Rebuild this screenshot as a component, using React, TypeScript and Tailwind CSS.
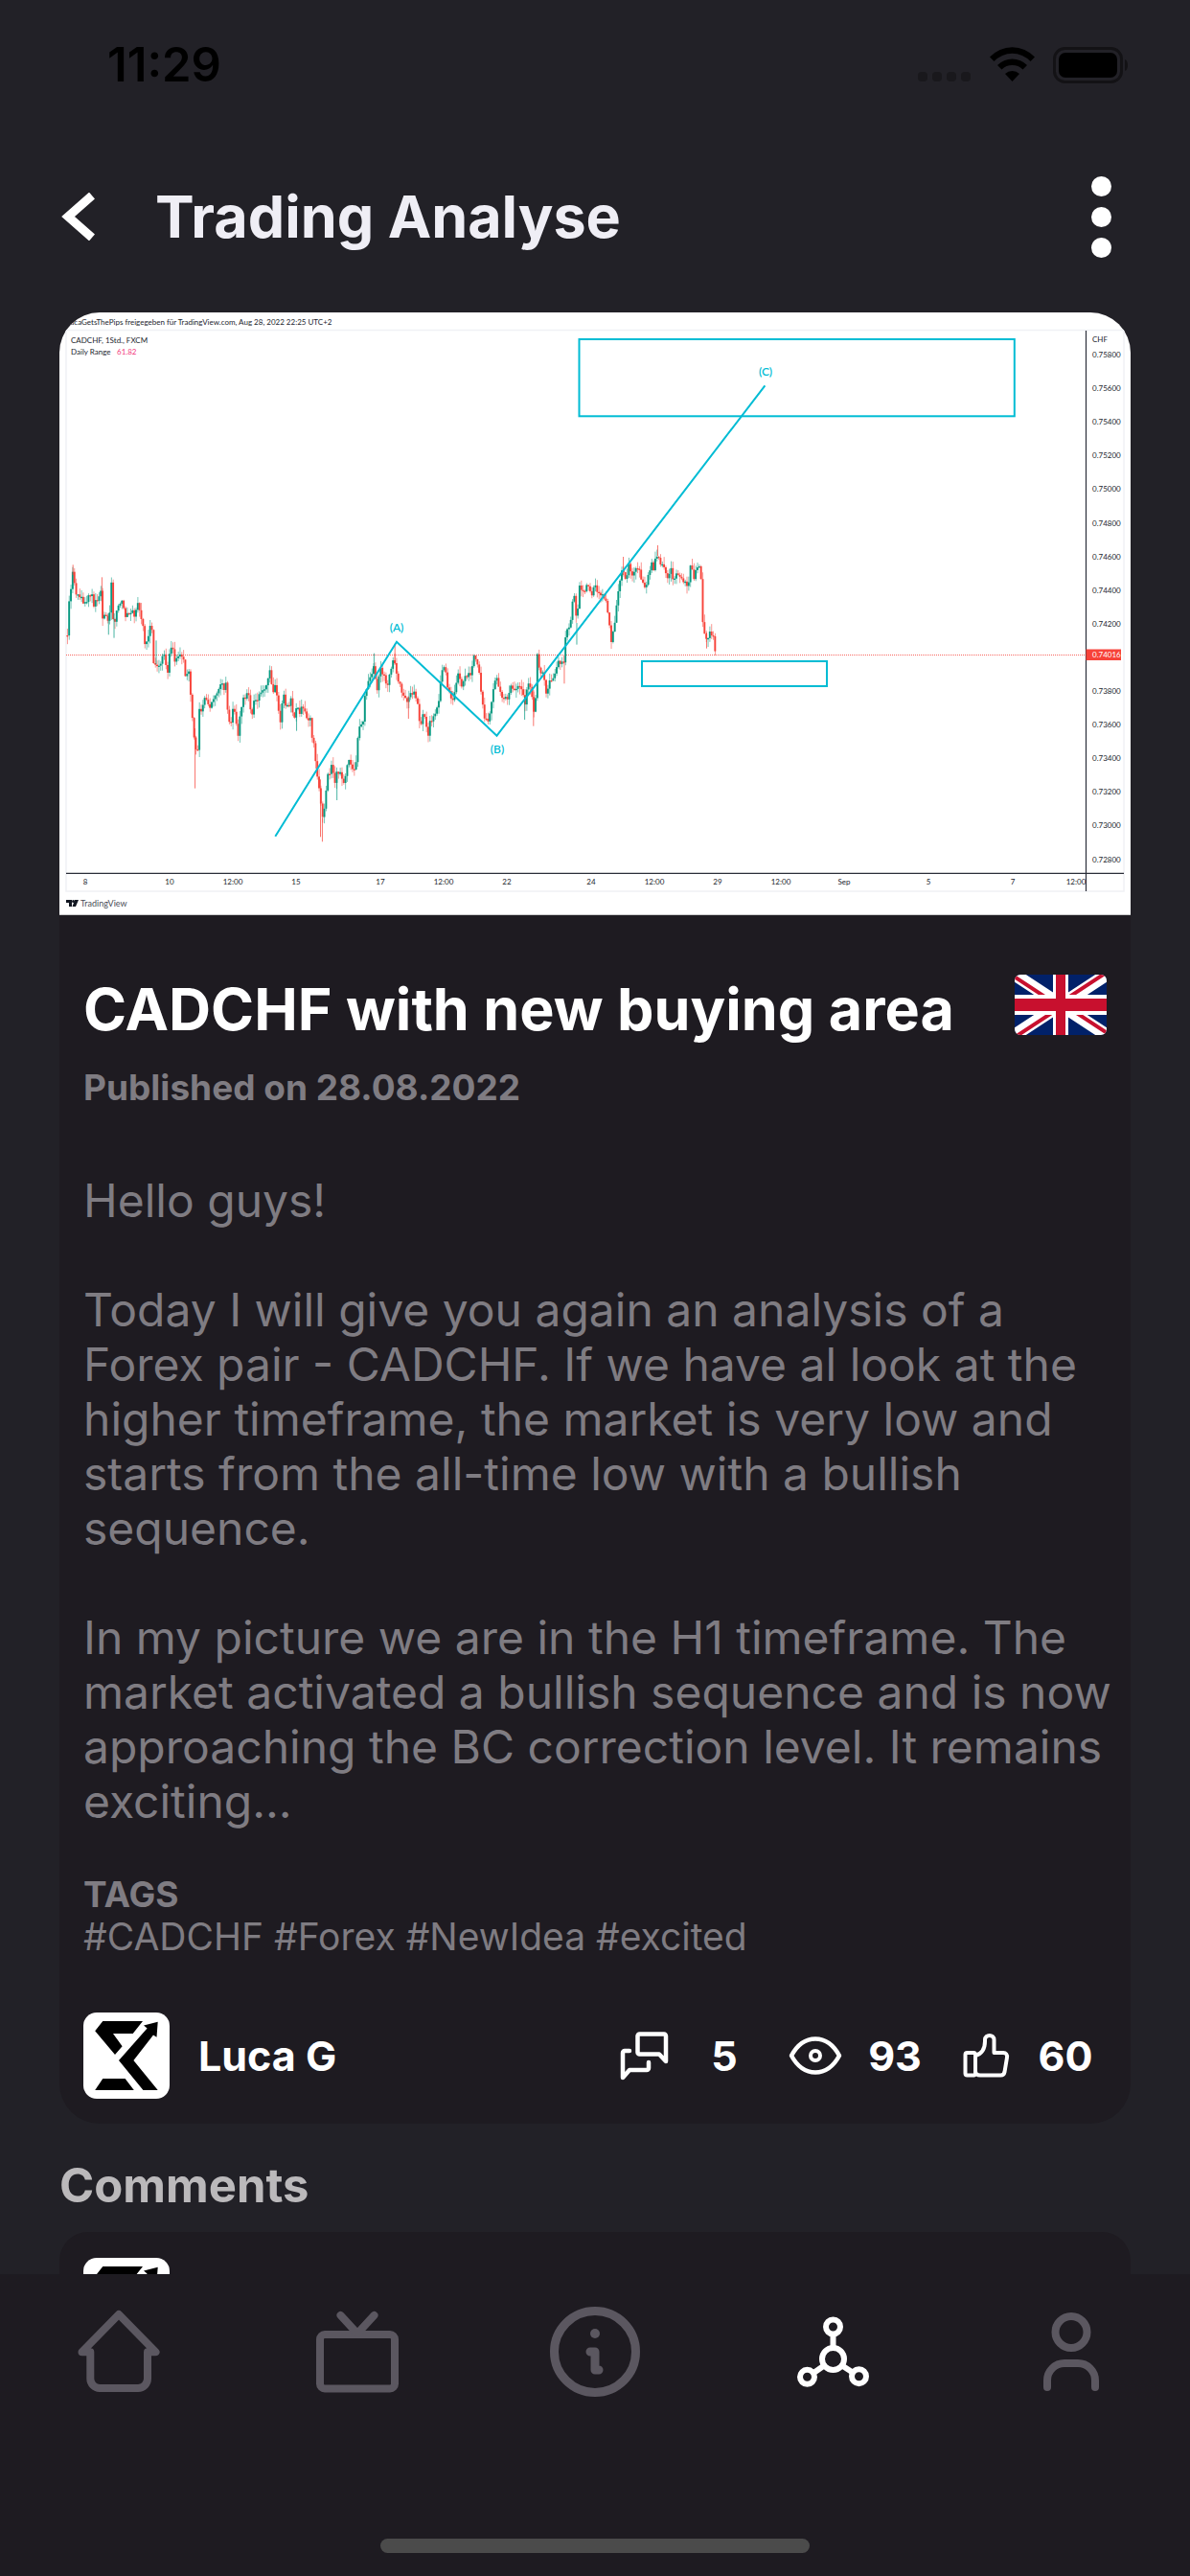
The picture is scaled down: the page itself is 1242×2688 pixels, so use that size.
import type { ReactNode } from "react";

// Closing prices of the hourly chart, as [x, y] pairs
const prices = [
  [26, 320], [31, 220], [36, 170], [41, 110], [46, 145], [52, 185], [58, 190], [64, 180], [70, 220], [76, 210],
  [82, 190], [88, 200], [93, 175], [100, 215], [105, 195], [112, 200], [118, 160], [123, 255], [130, 235], [136, 260],
  [142, 240], [146, 118], [151, 245], [157, 260], [165, 205], [178, 205], [185, 260], [192, 230], [205, 230], [210, 260],
  [217, 212], [226, 235], [233, 280], [240, 347], [248, 310], [256, 270], [262, 400], [270, 415], [280, 400], [292, 365],
  [300, 430], [305, 360], [313, 352], [322, 395], [332, 380], [343, 370], [350, 450], [357, 400], [363, 495], [370, 590],
  [376, 655], [382, 672], [386, 548], [395, 540], [405, 500], [413, 535], [425, 500], [435, 490], [444, 460], [453, 475],
  [459, 465], [465, 560], [472, 588], [480, 518], [486, 560], [492, 620], [500, 535], [508, 510], [518, 478], [524, 510],
  [530, 570], [536, 510], [550, 500], [560, 470], [570, 465], [580, 412], [586, 505], [593, 450], [600, 520], [608, 572],
  [616, 500], [625, 535], [637, 515], [645, 570], [652, 540], [662, 545], [668, 520], [675, 555], [690, 575], [696, 655],
  [702, 650], [706, 780], [711, 740], [716, 820], [723, 885], [730, 850], [735, 748], [747, 725], [756, 770], [763, 725],
  [770, 745], [780, 768], [788, 735], [797, 690], [807, 740], [813, 730], [818, 633], [825, 580], [832, 595], [838, 510],
  [846, 465], [855, 440], [863, 405], [872, 480], [882, 410], [890, 430], [898, 465], [908, 435], [917, 385], [925, 430],
  [932, 455], [940, 485], [948, 515], [958, 500], [970, 485], [982, 520], [990, 600], [997, 550], [1005, 590], [1010, 625],
  [1018, 570], [1030, 560], [1038, 530], [1046, 430], [1052, 405], [1060, 440], [1068, 490], [1078, 515], [1085, 475],
  [1092, 420], [1104, 478], [1112, 435], [1128, 425], [1137, 370], [1148, 405], [1156, 490], [1165, 570], [1175, 575],
  [1185, 510], [1197, 430], [1205, 490], [1215, 510], [1228, 505], [1240, 465], [1255, 470], [1265, 480], [1275, 515],
  [1282, 465], [1292, 485], [1302, 560], [1308, 360], [1316, 430], [1326, 430], [1333, 500], [1342, 450], [1352, 450],
  [1365, 385], [1382, 400], [1387, 280], [1398, 285], [1408, 170], [1416, 275], [1423, 160], [1430, 175], [1445, 160],
  [1455, 180], [1468, 155], [1478, 180], [1495, 190], [1503, 265], [1510, 330], [1520, 270], [1528, 180], [1536, 112],
  [1550, 125], [1560, 85], [1565, 140], [1573, 105], [1584, 95], [1592, 130], [1603, 155], [1614, 110], [1621, 70],
  [1626, 105], [1634, 55], [1642, 85], [1653, 100], [1664, 135], [1672, 90], [1680, 145], [1685, 120], [1699, 130],
  [1710, 145], [1720, 155], [1726, 88], [1735, 130], [1744, 100], [1751, 95], [1755, 125], [1759, 260], [1767, 335],
  [1774, 310], [1781, 292], [1788, 315], [1794, 370],
];

// x, top, bottom, rising
const spikes: [number, number, number, boolean][] = [
  [42, 88, 120, false], [121, 127, 200, false], [139, 240, 307, true], [154, 240, 317, true], [269, 325, 400, true],
  [375, 600, 788, false], [652, 540, 608, true], [717, 760, 940, false], [722, 880, 955, false], [762, 740, 825, true],
  [920, 335, 400, false], [957, 500, 570, false], [863, 365, 410, true], [1274, 500, 573, true], [1298, 480, 593, false],
  [1382, 390, 460, false], [1416, 270, 338, true], [1543, 63, 120, false], [1637, 27, 60, false], [1770, 300, 350, false],
];

const priceAt = (x: number) => {
  const i = Math.max(1, prices.findIndex((p) => p[0] >= x));
  const [x0, y0] = prices[i - 1];
  const [x1, y1] = prices[i];
  return y0 + ((y1 - y0) * (x - x0)) / (x1 - x0);
};

const noise = (n: number) => Math.abs((Math.sin(n * 12.9898) * 43758.5453) % 1);

const candles = Array.from({ length: 369 }, (_, i) => {
  const x = 27 + i * 4.8;
  const open = priceAt(x - 4.8 < 26 ? 26 : x - 4.8) + (noise(i) - 0.5) * 22;
  const close = priceAt(x) + (noise(i + 1) - 0.5) * 22;
  const top = Math.min(open, close);
  const height = Math.max(4, Math.abs(close - open));
  return {
    x,
    top,
    height,
    high: top - noise(i + 400) * 24,
    low: top + height + noise(i + 800) * 24,
    color: close < open ? "#089981" : "#f7433a",
  };
});

const priceLabels = [
  "0.75800", "0.75600", "0.75400", "0.75200", "0.75000", "0.74800", "0.74600", "0.74400",
  "0.74200", "", "0.73800", "0.73600", "0.73400", "0.73200", "0.73000", "0.72800",
];

const timeLabels: [number, string][] = [
  [27, "8"], [115, "10"], [181, "12:00"], [247, "15"], [335, "17"], [401, "12:00"], [467, "22"], [555, "24"],
  [621, "12:00"], [687, "29"], [753, "12:00"], [819, "Sep"], [907, "5"], [995, "7"], [1061, "12:00"],
];

const PriceChart = () => {
  return (
    <svg viewBox="0 0 1118 629" className="block w-full bg-white font-['Lato',sans-serif]" role="img" aria-label="CADCHF chart">
      <rect x="7" y="18.5" width="1104" height="585.5" fill="none" stroke="#f0f1f5" strokeWidth="1.5" />
      <g fontSize="8" fill="#22252e">
        <text x="7" y="13">LucaGetsThePips freigegeben für TradingView.com, Aug 28, 2022 22:25 UTC+2</text>
        <text x="12" y="32">CADCHF, 1Std., FXCM</text>
        <text x="12" y="44">Daily Range</text>
        <text x="60" y="44" fill="#f23a7c">61.82</text>
      </g>
      <path d="M7 357.5H1071" stroke="#f7433a" strokeDasharray="1 1" opacity="0.8" />
      <g transform="translate(-2 234) scale(0.3827 0.3333)">
        {candles.map((c) => (
          <g key={c.x} fill={c.color}>
            <rect x={c.x - 1} y={c.high} width="2.4" height={c.low - c.high} opacity="0.6" />
            <rect x={c.x - 2.5} y={c.top} width="5" height={c.height} />
          </g>
        ))}
        {spikes.map(([x, top, bottom, rising]) => (
          <rect key={x} x={x - 1} y={top} width="2.4" height={bottom - top} fill={rising ? "#089981" : "#f7433a"} opacity="0.8" />
        ))}
      </g>
      <g fill="none" stroke="#00bcd4" strokeWidth="2">
        <path d="M225.3 546.7L352 343.7L456.5 441.7L736.4 76.3" />
        <rect x="542.5" y="28" width="454.3" height="80.3" />
        <rect x="608" y="364" width="193" height="26" />
      </g>
      <g fontSize="12" fontWeight="600" fill="#00bcd4" textAnchor="middle">
        <text x="352" y="333">(A)</text>
        <text x="457" y="460">(B)</text>
        <text x="737" y="66">(C)</text>
      </g>
      <path d="M7 585.3H1111M1071.5 19V604" stroke="#2a2e39" strokeWidth="1.2" />
      <g fontSize="8" fill="#22252e">
        <text x="1078" y="31">CHF</text>
        {priceLabels.map((label, i) => (
          <text key={i} x="1078" y={47 + i * 35.1}>{label}</text>
        ))}
        {timeLabels.map(([x, label]) => (
          <text key={x} x={x} y="597" textAnchor="middle">{label}</text>
        ))}
      </g>
      <rect x="1071.5" y="351.5" width="36.5" height="11.5" fill="#f7433a" />
      <text x="1078" y="360" fontSize="8" fill="#fff">0.74016</text>
      <path d="M7 613h6v7h-3v-4H7zM16 613h4l-3 7h-3.5z" fill="#131722" />
      <circle cx="14.5" cy="614.5" r="1.5" fill="#131722" />
      <text x="22" y="620" fontSize="9" fill="#4a4d56">TradingView</text>
      <path d="M0 628.5H1118" stroke="#c9c8ca" />
    </svg>
  );
};

const Avatar = () => {
  return (
    <svg viewBox="0 0 90 90" className="size-[90px] shrink-0 rounded-[14px] bg-white" role="img" aria-label="Luca G">
      <path d="M20.3 9H62L51.7 22H31L40.6 35.3L33 44L12.2 19.3Z" />
      <path d="M37 50L66.6 16.5L63 13.5L77.7 9.7L76.5 25.7L73 23.5L52.4 50L77.7 81H62.4Z" />
      <path d="M20.3 69H43.6L52.8 81H12.2Z" />
    </svg>
  );
};

const UkFlag = () => {
  return (
    <svg viewBox="0 0 96 63" className="h-[63px] w-24 shrink-0 rounded-md" role="img" aria-label="English">
      <clipPath id="pinwheel">
        <path d="M48 31.5H96V63ZM48 31.5V63H0ZM48 31.5H0V0ZM48 31.5V0H96Z" />
      </clipPath>
      <rect width="96" height="63" fill="#012169" />
      <path d="M0 0L96 63M96 0L0 63" stroke="#fff" strokeWidth="13" />
      <path d="M0 0L96 63M96 0L0 63" stroke="#c8102e" strokeWidth="8" clipPath="url(#pinwheel)" />
      <path d="M48 0V63" stroke="#fff" strokeWidth="16" />
      <path d="M0 31.5H96" stroke="#fff" strokeWidth="21" />
      <path d="M48 0V63" stroke="#c8102e" strokeWidth="10" />
      <path d="M0 31.5H96" stroke="#c8102e" strokeWidth="13" />
    </svg>
  );
};

const Stat = ({ label, value, children }: { label: string; value: number; children: ReactNode }) => {
  return (
    <button type="button" aria-label={label} className="flex items-center gap-[27px]">
      <svg viewBox="0 0 56 52" className="h-[52px] w-14" fill="none" stroke="currentColor" strokeWidth="4.5" strokeLinecap="round" strokeLinejoin="round">
        {children}
      </svg>
      <span className="flex w-14 justify-center">{value}</span>
    </button>
  );
};

const NavItem = ({ label, active, children }: { label: string; active?: boolean; children: ReactNode }) => {
  return (
    <a href="#" aria-label={label} className={active ? "flex justify-center text-white" : "flex justify-center text-[#5b5760]"}>
      <svg viewBox="0 0 100 100" className="size-[100px]" fill="none" stroke="currentColor" strokeWidth="8" strokeLinecap="round" strokeLinejoin="round">
        {children}
      </svg>
    </a>
  );
};

const StatusBar = () => {
  return (
    <div className="flex h-[126px] shrink-0 items-center justify-between pt-[10px] pr-[62px] pl-28 text-black">
      <div className="text-[49px] font-semibold">11:29</div>
      <svg viewBox="0 0 222 38" className="h-[38px] w-[222px]">
        <g fill="#19181c">
          <rect x="0" y="26" width="10" height="10" rx="4" />
          <rect x="15" y="26" width="10" height="10" rx="4" />
          <rect x="30" y="26" width="10" height="10" rx="4" />
          <rect x="45" y="26" width="10" height="10" rx="4" />
        </g>
        <path d="M75 10.5A32 32 0 0 1 122 10.5L117.5 15A26 26 0 0 0 79.5 15Z" />
        <path d="M83 19A22 22 0 0 1 114 19L109.5 23.5A16 16 0 0 0 87.5 23.5Z" />
        <path d="M91 28A11 11 0 0 1 106 28L98.5 36Z" />
        <rect x="142.5" y="1.5" width="70" height="35" rx="11" fill="none" stroke="#131215" strokeWidth="3" />
        <rect x="147" y="6" width="61" height="26" rx="7" />
        <path d="M216 13C220 14 220 24 216 25Z" fill="#131215" />
      </svg>
    </div>
  );
};

const Header = () => {
  return (
    <header className="flex h-[200px] shrink-0 items-center justify-between px-[62px]">
      <div className="flex items-center gap-[60px]">
        <button type="button" aria-label="Back">
          <svg viewBox="0 0 40 50" className="h-[50px] w-10" fill="none" stroke="#fff" strokeWidth="9">
            <path d="M34 3L9 25L34 47" />
          </svg>
        </button>
        <h1 className="text-[61px] leading-[72px] font-bold text-[#efeef5]">Trading Analyse</h1>
      </div>
      <button type="button" aria-label="More" className="flex w-[62px] flex-col items-center gap-[11px]">
        <span className="size-[21px] rounded-full bg-white" />
        <span className="size-[21px] rounded-full bg-white" />
        <span className="size-[21px] rounded-full bg-white" />
      </button>
    </header>
  );
};

const AnalysisCard = () => {
  return (
    <article className="overflow-hidden rounded-[42px] bg-[#1e1b21]">
      <PriceChart />
      <div className="px-[25px] pt-[62px] pb-[26px] text-[#7f7c82]">
        <div className="flex items-start justify-between">
          <h2 className="text-[61px] leading-[72px] font-bold whitespace-nowrap text-white">CADCHF with new buying area</h2>
          <UkFlag />
        </div>
        <div className="mt-6 text-[37px] leading-[44px] font-bold">Published on 28.08.2022</div>
        <div className="mt-[67px] -mr-3 flex flex-col gap-[57px] text-[48px] leading-[57px]">
          <p>Hello guys!</p>
          <p>
            Today I will give you again an analysis of a Forex pair - CADCHF. If we have al look at the higher
            timeframe, the market is very low and starts from the all-time low with a bullish sequence.
          </p>
          <p>
            In my picture we are in the H1 timeframe. The market activated a bullish sequence and is now approaching the
            BC correction level. It remains exciting...
          </p>
        </div>
        <div className="mt-[47px] text-[37px] leading-[44px] font-bold">TAGS</div>
        <div className="text-[39px] leading-[44px]">#CADCHF #Forex #NewIdea #excited</div>
        <div className="mt-[57px] flex items-center justify-between pr-[15px] text-[43px] font-bold text-white">
          <div className="flex items-center gap-[30px]">
            <Avatar />
            <span>Luca G</span>
          </div>
          <div className="flex gap-[39px]">
            <Stat label="Comments" value={5}>
              <path d="M22.5 3.5H48A2 2 0 0 1 50 5.5V32L43 24.5H22.5A2 2 0 0 1 20.5 22.5V5.5A2 2 0 0 1 22.5 3.5Z" />
              <path d="M12 21H7A2 2 0 0 0 5 23V49L12 41H30A2 2 0 0 0 32 39V33" />
            </Stat>
            <Stat label="Views" value={93}>
              <path d="M3 26C9 15 18 8.5 28 8.5S47 15 53 26C47 37 38 43.5 28 43.5S9 37 3 26Z" />
              <circle cx="28" cy="26" r="5" strokeWidth="4" />
            </Stat>
            <Stat label="Likes" value={60}>
              <rect x="6.5" y="23" width="10.5" height="23.5" rx="2" strokeWidth="4" />
              <path strokeWidth="4" d="M17 26C24 24 27 19 27 11V9.5C27 3.5 36.5 3.5 36.5 9.5V23H46C49 23 50.5 25 50 28L47.5 43C47 45.5 45.5 46.5 43.5 46.5H22C19 46.5 17 44.5 17 42Z" />
            </Stat>
          </div>
        </div>
      </div>
    </article>
  );
};

const TabBar = () => {
  return (
    <nav className="flex h-[315px] shrink-0 flex-col justify-between bg-[#1e1b21] pt-[31px] pb-6">
      <div className="grid grid-cols-5">
        <NavItem label="Home">
          <path d="M20.3 50.3H11.5L50 11L88.5 50.3H80V78A10 10 0 0 1 70 88H30A10 10 0 0 1 20.3 78Z" />
        </NavItem>
        <NavItem label="TV">
          <rect x="11" y="32" width="78" height="56.5" rx="5" />
          <path d="M32.5 12L50 31L67.5 12" />
        </NavItem>
        <NavItem label="Info">
          <circle cx="50" cy="50" r="42.5" strokeWidth="9" />
          <circle cx="50" cy="31" r="5" fill="currentColor" stroke="none" />
          <path d="M45 50H50V69H54" strokeWidth="9" />
        </NavItem>
        <NavItem label="Analyses" active>
          <g strokeWidth="6">
            <circle cx="50.5" cy="57.5" r="11.5" />
            <circle cx="50.5" cy="24" r="7.5" />
            <circle cx="23.5" cy="76.3" r="7.5" />
            <circle cx="77.5" cy="75.7" r="7.5" />
            <path d="M50.5 32V46M41 64.5L31 71.5M60 64.5L70 71" />
          </g>
        </NavItem>
        <NavItem label="Profile">
          <circle cx="50" cy="29.5" r="16.5" />
          <path d="M25 87V80A18 18 0 0 1 43 62H57A18 18 0 0 1 75 80V87" />
        </NavItem>
      </div>
      <div className="h-[15px] w-[36%] self-center rounded-full bg-[#4b4b4b]" />
    </nav>
  );
};

const App = () => {
  return (
    <div className="flex h-screen flex-col overflow-hidden bg-[#222127] font-['Inter',sans-serif]">
      <StatusBar />
      <Header />
      <main className="min-h-0 flex-1 overflow-hidden px-[62px]">
        <AnalysisCard />
        <h2 className="mt-[37px] mb-5 text-[49px] leading-[56px] font-bold text-[#bbb9bb]">Comments</h2>
        <div className="rounded-[30px] bg-[#1e1b21] px-[25px] py-[27px]">
          <Avatar />
        </div>
      </main>
      <TabBar />
    </div>
  );
};

export default App;
